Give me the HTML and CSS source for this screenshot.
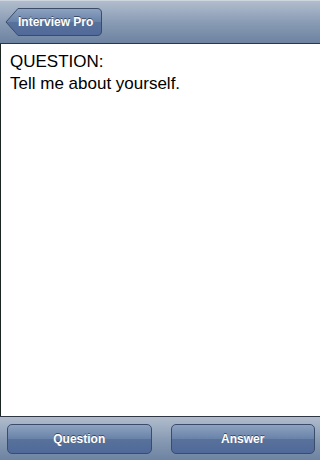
FILE: index.html
```html
<!DOCTYPE html>
<html lang="en">
<head>
    <meta charset="UTF-8">
    <meta name="viewport" content="width=device-width, initial-scale=1.0">
    <title>Interview Pro</title>
    <link rel="stylesheet" href="styles.css">
</head>
<body>
    <div class="screen">
        <!-- Barra de navegação -->
        <div class="navBar">
            <button type="button" class="backButton">
                <svg class="backShape" width="98" height="30" viewBox="0 0 98 30">
                    <defs>
                        <linearGradient id="backGrad" x1="0" y1="0" x2="0" y2="1">
                            <stop offset="0" stop-color="#8ea3c1"/>
                            <stop offset="0.5" stop-color="#6882a8"/>
                            <stop offset="0.5" stop-color="#58729b"/>
                            <stop offset="1" stop-color="#50699a"/>
                        </linearGradient>
                    </defs>
                    <path d="M1 15 L13 1.5 H92 Q96.5 1.5 96.5 6 V24 Q96.5 28.5 92 28.5 H13 Z"
                          fill="url(#backGrad)" stroke="#3a4c69" stroke-width="1"/>
                </svg>
                <span class="backLabel">Interview Pro</span>
            </button>
        </div>

        <!-- Conteúdo -->
        <div class="content">
            <p class="questionText">QUESTION:<br>Tell me about yourself.</p>
        </div>

        <!-- Barra de ferramentas -->
        <div class="toolBar">
            <button type="button" class="toolButton">Question</button>
            <button type="button" class="toolButton">Answer</button>
        </div>
    </div>
</body>
</html>
```

FILE: styles.css
```css
/* Estilo geral */
body {
    margin: 0;
    font-family: "Liberation Sans", Arial, sans-serif;
}

.screen {
    width: 320px;
    height: 460px;
    display: flex;
    flex-direction: column;
    background-color: #ffffff;
}

/* Barra de navegação */
.navBar {
    height: 42px;
    border-top: 1px solid #cdd5df;
    border-bottom: 1px solid #2d3642;
    background: linear-gradient(#b1bdcd, #8a9cb5 50%, #6d83a1);
    display: flex;
    align-items: center;
    padding-left: 5px;
}

.backButton {
    position: relative;
    width: 98px;
    height: 30px;
    padding: 0 0 0 13px;
    border: none;
    background: none;
    display: flex;
    align-items: center;
    cursor: pointer;
}

.backShape {
    position: absolute;
    left: 0;
    top: 0;
}

.backLabel {
    position: relative;
    color: #ffffff;
    font-family: "Liberation Sans", Arial, sans-serif;
    font-weight: bold;
    font-size: 12px;
    text-shadow: 0 -1px 0 #3b4b66;
}

/* Conteúdo */
.content {
    flex: 1;
    border-left: 1px solid #1a2420;
    padding: 7px 9px;
}

.questionText {
    margin: 0;
    font-size: 17px;
    line-height: 22px;
    color: #000000;
}

/* Barra de ferramentas */
.toolBar {
    height: 44px;
    border-top: 1px solid #2d3642;
    background: linear-gradient(#b1bdcd, #8a9cb5 50%, #6d83a1);
    display: flex;
    gap: 19px;
    padding: 7px 5px 6px 7px;
    box-sizing: border-box;
}

.toolButton {
    flex: 1;
    border: 1px solid #3a4c69;
    border-radius: 5px;
    background: linear-gradient(#8ea3c1, #6882a8 50%, #58729b 50%, #50699a);
    color: #ffffff;
    font-family: "Liberation Sans", Arial, sans-serif;
    font-weight: bold;
    font-size: 12px;
    text-shadow: 0 -1px 0 #3b4b66;
    cursor: pointer;
}
```
